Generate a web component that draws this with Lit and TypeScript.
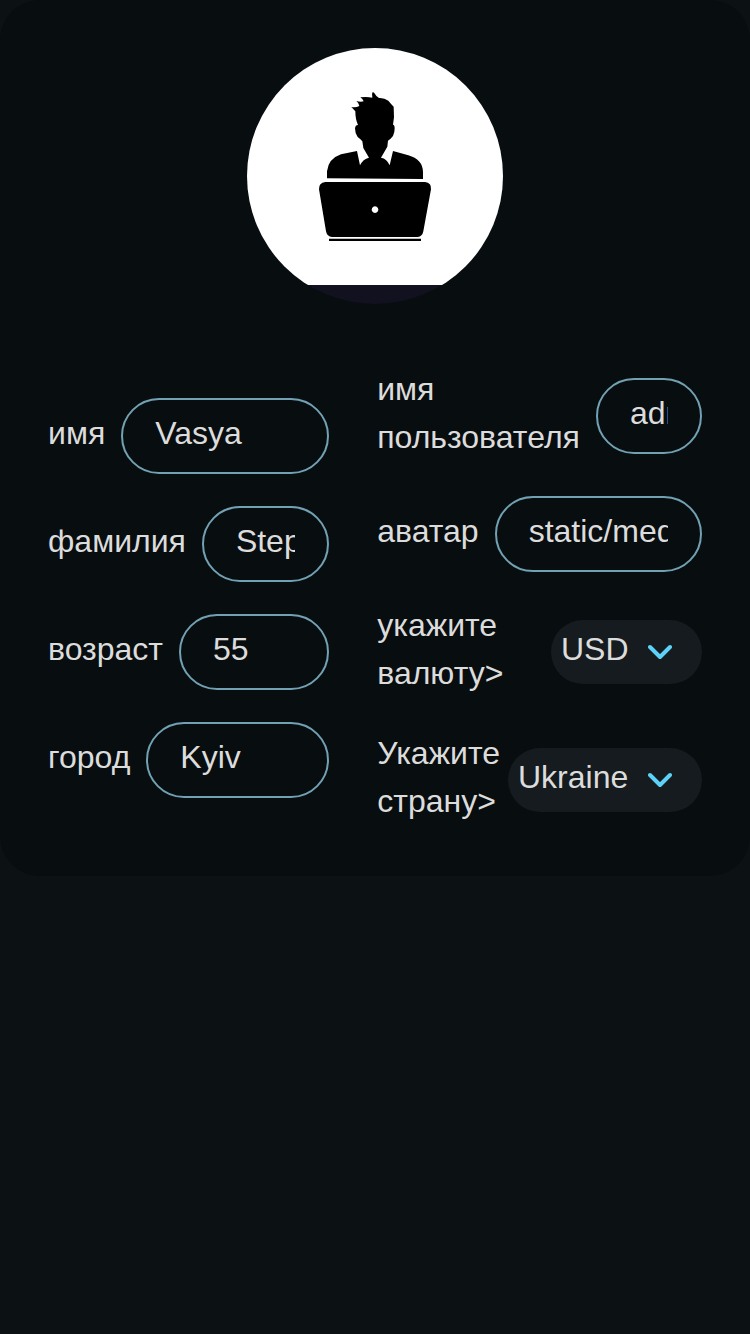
import { LitElement, html, css } from "lit";
import { customElement, property } from "lit/decorators.js";

@customElement("text-field")
class TextField extends LitElement {
  @property() label = "";
  @property() value = "";

  static styles = css`
    :host {
      display: flex;
      align-items: center;
      gap: 16px;
    }
    .label {
      flex: 0 1 auto;
      margin: -3px 0 3px;
      line-height: 48px;
    }
    .input {
      box-sizing: border-box;
      flex: 1 1 0;
      width: 106px;
      min-width: 106px;
      height: 76px;
      margin: 0;
      padding: 0 32px 6px;
      border: 2px solid #71a1b3;
      border-radius: 38px;
      outline: none;
      background: transparent;
      color: inherit;
      font: inherit;
    }
  `;

  render() {
    return html`
      <label class="label" for="field">${this.label}</label>
      <input class="input" id="field" type="text" .value=${this.value} />
    `;
  }
}

@customElement("select-field")
class SelectField extends LitElement {
  @property() label = "";
  @property() value = "";

  static styles = css`
    :host {
      display: flex;
      align-items: center;
      justify-content: space-between;
      gap: 8px;
    }
    .label {
      flex: 1 1 0;
      margin: -3px 0 3px;
      line-height: 48px;
    }
    .control {
      display: grid;
      flex: none;
      align-items: center;
    }
    .select {
      grid-area: 1 / 1;
      height: 64px;
      margin: 0;
      padding: 0 73px 6px 10px;
      border: 0;
      border-radius: 32px;
      outline: none;
      appearance: none;
      background: #151b1e;
      color: inherit;
      font: inherit;
    }
    .arrow {
      grid-area: 1 / 1;
      justify-self: end;
      width: 24px;
      height: 24px;
      margin-right: 30px;
      pointer-events: none;
    }
  `;

  render() {
    return html`
      <label class="label" for="field">${this.label}</label>
      <span class="control">
        <select class="select" id="field">
          <option>${this.value}</option>
        </select>
        <svg class="arrow" viewBox="0 0 24 24" aria-hidden="true">
          <path
            d="M2 7 L12 17 L22 7"
            fill="none"
            stroke="#5dd2f9"
            stroke-width="4"
            stroke-linecap="round"
            stroke-linejoin="round"
          />
        </svg>
      </span>
    `;
  }
}

@customElement("app-root")
class AppRoot extends LitElement {
  static styles = css`
    :host {
      display: block;
      min-height: 100vh;
      background: #0c1113;
      color: #dcdcdc;
      font: 32px / 48px "Liberation Sans", Arial, sans-serif;
    }
    .card {
      display: flex;
      flex-direction: column;
      gap: 64px;
      padding: 48px;
      border-radius: 40px;
      background: #080d0f;
    }
    .avatar {
      display: block;
      align-self: center;
      width: 256px;
      height: 256px;
      border-radius: 50%;
      background: #11111f;
    }
    .form {
      display: flex;
      align-items: center;
      gap: 48px;
    }
    .column {
      display: flex;
      flex: 1 1 0;
      flex-direction: column;
      gap: 32px;
    }
  `;

  render() {
    return html`
      <main class="card">
        <svg class="avatar" viewBox="0 0 256 256" role="img" aria-label="аватар">
          <rect width="256" height="237" fill="#fff" />
          <g transform="translate(52 32) scale(0.33333)">
            <path
              d="M157 81 Q170 84 181 78 Q179 68 172 63 Q184 67 194 64 Q191 56 184 52 Q204 49 220 53 Q217 42 221 36 Q226 37 228 42 Q232 50 240 54 Q256 53 268 62 Q276 72 284 80 L285 112 L282 134 Q287 135 287 145 Q287 159 282 168 Q276 176 267 182 L265 200 L246 233 Q264 236 272 256 L282 213 L328 226 Q371 238 372 276 L372 297 L84 295 L84 274 Q88 236 126 223 L174 213 L183 256 Q192 237 210 233 L193 204 L190 184 Q184 176 176 171 Q168 161 168 145 Q169 135 177 135 Q169 118 169 94 Z"
            />
            <path
              fill-rule="evenodd"
              d="M79 306 H378 Q398 308 396 328 L373 454 Q370 470 356 471 H99 Q84 470 81 454 L60 328 Q59 308 79 306 Z M228 379 a10 10 0 1 0 0.1 0 Z"
            />
            <path d="M90 476 H366 V483 H90 Z" />
          </g>
        </svg>
        <form class="form">
          <div class="column">
            <text-field label="имя" value="Vasya"></text-field>
            <text-field label="фамилия" value="Stepanov"></text-field>
            <text-field label="возраст" value="55"></text-field>
            <text-field label="город" value="Kyiv"></text-field>
          </div>
          <div class="column">
            <text-field label="имя пользователя" value="admin"></text-field>
            <text-field label="аватар" value="static/media/avatar.png"></text-field>
            <select-field label="укажите валюту>" value="USD"></select-field>
            <select-field label="Укажите страну>" value="Ukraine"></select-field>
          </div>
        </form>
      </main>
    `;
  }
}
